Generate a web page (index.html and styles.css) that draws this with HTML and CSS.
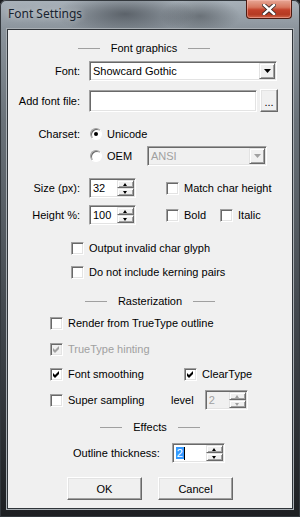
FILE: index.html
```
<!DOCTYPE html>
<html lang="en">
<head>
    <meta charset="UTF-8">
    <title>Font Settings</title>
    <link rel="stylesheet" href="styles.css">
</head>
<body>
<div class="window">
    <div class="titlebar">
        <span class="title">Font Settings</span>
        <div class="close">
            <svg width="14" height="11" viewBox="0 0 14 11">
                <path d="M2 1 L12 10 M12 1 L2 10" stroke="#3a2a28" stroke-width="4.2" stroke-linecap="square"/>
                <path d="M2 1 L12 10 M12 1 L2 10" stroke="#ffffff" stroke-width="2.4" stroke-linecap="square"/>
            </svg>
        </div>
    </div>

    <div class="client">
        <div class="section sec-font"><i class="rule"></i><span>Font graphics</span><i class="rule"></i></div>

        <div class="row r-font">
            <span class="lbl">Font:</span>
            <div class="combo font-combo">
                <span class="val">Showcard Gothic</span>
                <span class="drop"><svg width="7" height="4"><polygon points="0,0 7,0 3.5,4" fill="#000"/></svg></span>
            </div>
        </div>

        <div class="row r-add">
            <span class="lbl">Add font file:</span>
            <div class="edit file-edit"></div>
            <button class="btn browse">...</button>
        </div>

        <div class="row r-charset">
            <span class="lbl">Charset:</span>
            <span class="radio on"></span>
            <span class="opt">Unicode</span>
        </div>

        <div class="row r-oem">
            <span class="radio"></span>
            <span class="opt oem">OEM</span>
            <div class="combo ansi-combo disabled">
                <span class="val">ANSI</span>
                <span class="drop"><svg width="7" height="4"><polygon points="0,0 7,0 3.5,4" fill="#a0a0a0"/></svg></span>
            </div>
        </div>

        <div class="row r-size">
            <span class="lbl">Size (px):</span>
            <div class="edit spin size-spin">
                <span class="val">32</span>
                <span class="arrows"><i class="up"></i><i class="down"></i></span>
            </div>
            <span class="check first"></span>
            <span class="opt">Match char height</span>
        </div>

        <div class="row r-height">
            <span class="lbl">Height %:</span>
            <div class="edit spin size-spin">
                <span class="val">100</span>
                <span class="arrows"><i class="up"></i><i class="down"></i></span>
            </div>
            <span class="check first"></span>
            <span class="opt">Bold</span>
            <span class="check italic"></span>
            <span class="opt">Italic</span>
        </div>

        <div class="row r-invalid indent1">
            <span class="check"></span>
            <span class="opt">Output invalid char glyph</span>
        </div>

        <div class="row r-kern indent1">
            <span class="check"></span>
            <span class="opt">Do not include kerning pairs</span>
        </div>

        <div class="section sec-raster"><i class="rule"></i><span>Rasterization</span><i class="rule"></i></div>

        <div class="row r-render indent2">
            <span class="check"></span>
            <span class="opt">Render from TrueType outline</span>
        </div>

        <div class="row r-hint indent2">
            <span class="check checked disabled">
                <svg width="7" height="7"><polygon points="0,2 2,4 6,0 6,3 2,7 0,5" fill="#a0a0a0"/></svg>
            </span>
            <span class="opt grey">TrueType hinting</span>
        </div>

        <div class="row r-smooth indent2">
            <div class="pair">
                <span class="check checked">
                    <svg width="7" height="7"><polygon points="0,2 2,4 6,0 6,3 2,7 0,5" fill="#000"/></svg>
                </span>
                <span class="opt">Font smoothing</span>
            </div>
            <span class="check checked">
                <svg width="7" height="7"><polygon points="0,2 2,4 6,0 6,3 2,7 0,5" fill="#000"/></svg>
            </span>
            <span class="opt">ClearType</span>
        </div>

        <div class="row r-super indent2">
            <div class="pair short">
                <span class="check"></span>
                <span class="opt">Super sampling</span>
            </div>
            <span class="opt level">level</span>
            <div class="edit spin level-spin disabled">
                <span class="val">2</span>
                <span class="arrows"><i class="up"></i><i class="down"></i></span>
            </div>
        </div>

        <div class="section sec-effects"><i class="rule"></i><span>Effects</span><i class="rule"></i></div>

        <div class="row r-outline">
            <span class="opt">Outline thickness:</span>
            <div class="edit spin outline-spin">
                <span class="val"><span class="sel">2</span><i class="caret"></i></span>
                <span class="arrows"><i class="up"></i><i class="down"></i></span>
            </div>
        </div>

        <div class="row r-buttons">
            <button class="btn push">OK</button>
            <button class="btn push">Cancel</button>
        </div>
    </div>
</div>
</body>
</html>
```

FILE: styles.css
```
body {
    margin: 0;
    width: 300px;
    height: 517px;
    overflow: hidden;
    background: #1a1c1f;
    font-family: "Liberation Sans", Arial, sans-serif;
    font-size: 11px;
    color: #000;
}
.window {
    box-sizing: border-box;
    width: 300px;
    height: 517px;
    padding: 0 7px 8px 7px;
    display: flex;
    flex-direction: column;
    border-radius: 6px 6px 0 0;
    background:
        radial-gradient(ellipse 70px 22px at 125px 14px, rgba(40,45,52,0.55), rgba(40,45,52,0) 100%),
        radial-gradient(ellipse 40px 18px at 200px 16px, rgba(50,55,60,0.45), rgba(50,55,60,0) 100%),
        linear-gradient(to bottom, #a9b2ba 0, #8c959d 28px, #6a7279 120px, #454b51 300px, #1d1f22 100%);
    box-shadow: inset 0 0 0 1px #33383d;
}
.titlebar {
    height: 29px;
    display: flex;
    justify-content: space-between;
    align-items: flex-start;
    flex-shrink: 0;
}
.title {
    font-family: "Noto Sans", sans-serif;
    font-size: 12px;
    color: #18232f;
    margin: 5px 0 0 1px;
    text-shadow: 0 0 6px rgba(255,255,255,0.7);
}
.close {
    width: 46px;
    height: 19px;
    margin-right: 1px;
    box-sizing: border-box;
    border: 1px solid #4d1a10;
    border-top: none;
    border-radius: 0 0 4px 4px;
    background: linear-gradient(to bottom, #e7a796 0, #d7775f 40%, #c2412a 55%, #b53a22 80%, #d0664a 100%);
    box-shadow: inset 0 0 0 1px rgba(255,200,190,0.45);
    display: flex;
    align-items: center;
    justify-content: center;
}
.client {
    flex: 1;
    background: #f0f0f0;
    border: 1px solid #2f3439;
    box-shadow: 0 0 0 1px #a9afb4;
    display: flex;
    flex-direction: column;
}
.row {
    display: flex;
    align-items: center;
    flex-shrink: 0;
    white-space: nowrap;
}
.lbl {
    width: 72px;
    text-align: right;
    margin-right: 9px;
}
.section {
    height: 14px;
    display: flex;
    align-items: center;
    justify-content: center;
    gap: 11px;
    flex-shrink: 0;
}
.rule {
    display: block;
    width: 22px;
    height: 1px;
    background: #a0a0a0;
}
.sec-font { margin-top: 11px; padding-right: 12px; }
.sec-raster { margin-top: 15px; }
.sec-effects { margin-top: 10px; }

/* sunken fields */
.edit, .combo {
    box-sizing: border-box;
    background: #fff;
    border: 1px solid;
    border-color: #a0a0a0 #fff #fff #a0a0a0;
    box-shadow: inset 1px 1px #696969, inset -1px -1px #e3e3e3;
    display: flex;
    align-items: center;
    position: relative;
}
.val {
    padding-left: 3px;
    flex: 1;
}
.combo .drop, .arrows i {
    box-sizing: border-box;
    background: #f0f0f0;
    border: 1px solid;
    border-color: #e3e3e3 #696969 #696969 #e3e3e3;
    box-shadow: inset 1px 1px #fff, inset -1px -1px #a0a0a0;
    display: flex;
    align-items: center;
    justify-content: center;
}
.combo .drop {
    width: 16px;
    height: 16px;
    margin: 0 1px 0 0;
}
.font-combo { width: 188px; height: 20px; }
.disabled { background: #f0f0f0; color: #a0a0a0; }
.ansi-combo { width: 120px; height: 20px; }
.file-edit { width: 168px; height: 22px; }

/* raised buttons */
.btn {
    box-sizing: border-box;
    font: inherit;
    color: #000;
    background: #f0f0f0;
    border: 1px solid;
    border-color: #fff #696969 #696969 #fff;
    box-shadow: inset -1px -1px #a0a0a0, inset 1px 1px #e3e3e3;
    padding: 0;
}
.browse {
    width: 18px;
    height: 23px;
    margin-left: 3px;
    padding-top: 3px;
}
.push { width: 75px; height: 23px; }

/* spin controls */
.spin .arrows {
    width: 17px;
    height: 16px;
    margin-right: 1px;
    display: flex;
    flex-direction: column;
}
.arrows i {
    flex: 1;
    position: relative;
}
.arrows i::after {
    content: "";
    position: absolute;
    left: 5px;
    border-left: 2.5px solid transparent;
    border-right: 2.5px solid transparent;
}
.arrows .up::after { top: 2px; border-bottom: 3px solid #000; }
.arrows .down::after { top: 2px; border-top: 3px solid #000; }
.spin.disabled .arrows .up::after { border-bottom-color: #a0a0a0; }
.spin.disabled .arrows .down::after { border-top-color: #a0a0a0; }
.size-spin { width: 47px; height: 20px; }
.level-spin { width: 43px; height: 20px; }
.outline-spin { width: 53px; height: 20px; }

.sel {
    background: #3399ff;
    color: #fff;
    padding: 0 1px;
}
.caret {
    display: inline-block;
    width: 1px;
    height: 13px;
    background: #000;
    vertical-align: -3px;
}

/* check boxes and radios */
.check, .radio {
    box-sizing: border-box;
    width: 13px;
    height: 13px;
    flex-shrink: 0;
    background: #fff;
    display: flex;
    align-items: center;
    justify-content: center;
}
.check {
    border: 1px solid;
    border-color: #a0a0a0 #fff #fff #a0a0a0;
    box-shadow: inset 1px 1px #696969, inset -1px -1px #e3e3e3;
}
.check.disabled { background: #f0f0f0; }
.radio {
    width: 12px;
    height: 12px;
    border-radius: 50%;
    border: 1px solid;
    border-color: #a0a0a0 #fff #fff #a0a0a0;
    box-shadow: inset 1px 1px #696969;
}
.radio.on::after {
    content: "";
    width: 4px;
    height: 4px;
    border-radius: 50%;
    background: #000;
}
.opt { margin-left: 5px; }
.opt.grey { color: #a0a0a0; }

.r-font { margin-top: 6px; }
.r-add { margin-top: 8px; }
.r-charset { margin-top: 15px; height: 14px; }
.r-charset .radio { margin-left: 1px; }
.r-oem { margin-top: 5px; padding-left: 82px; }
.oem { width: 40px; }
.r-size { margin-top: 12px; }
.r-height { margin-top: 7px; }
.check.first { margin-left: 30px; }
.check.italic { margin-left: 14px; }
.indent1 { padding-left: 63px; height: 14px; }
.r-invalid { margin-top: 16px; }
.r-kern { margin-top: 10px; }
.indent2 { padding-left: 42px; height: 14px; }
.r-render { margin-top: 8px; }
.r-hint { margin-top: 12px; }
.r-smooth { margin-top: 11px; }
.pair { display: flex; align-items: center; width: 134px; }
.pair.short { width: 116px; }
.r-super { margin-top: 9px; height: 20px; }
.level { margin-left: 5px; margin-right: 11px; }
.r-outline { margin-top: 9px; padding-left: 60px; }
.r-outline .opt { margin-right: 12px; }
.r-buttons { margin-top: 14px; padding-left: 59px; gap: 16px; }
```
